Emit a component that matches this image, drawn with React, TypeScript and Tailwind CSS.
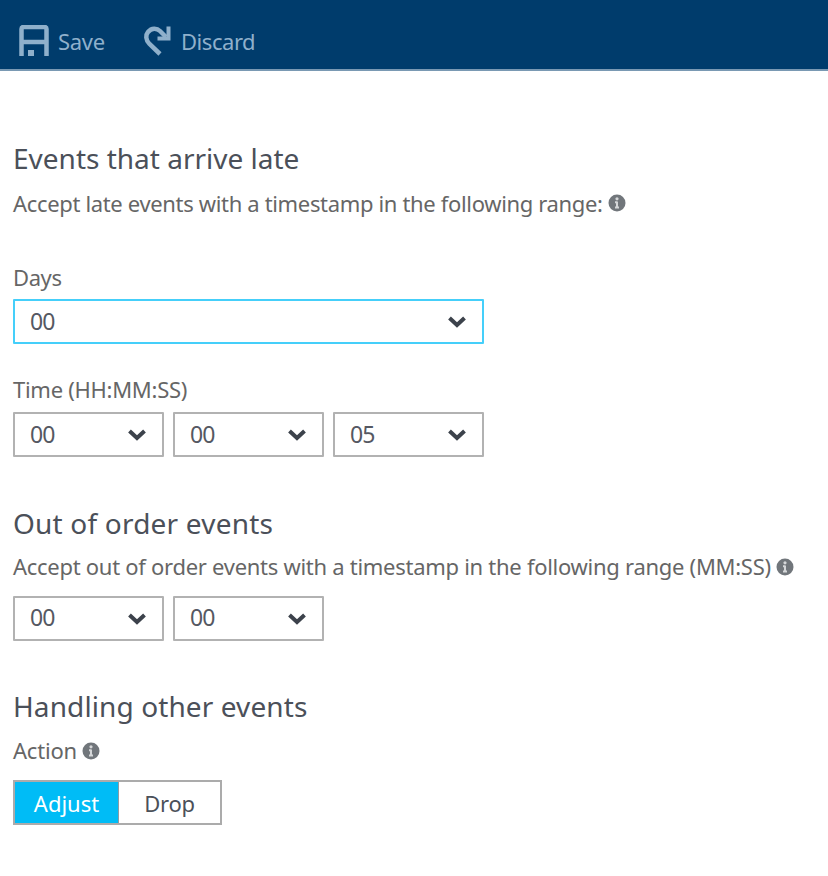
import { useState } from "react";

function InfoIcon() {
  return (
    <svg className="ml-[5px] h-[18px] w-[18px] shrink-0" viewBox="0 0 18 18">
      <circle cx="9" cy="9" r="8.500" fill="#71767b" />
      <circle cx="9" cy="4.800" r="1.600" fill="#d5d7d9" />
      <path d="M9 7.500V13.500M7 8.200H9M7 13.500H11" fill="none" stroke="#d5d7d9" strokeWidth="2" />
    </svg>
  );
}

function Select({
  value,
  className = "w-[151px] border-[#b2b2b2]",
  textClass = "",
}: {
  value: string;
  className?: string;
  textClass?: string;
}) {
  return (
    <button className={`flex h-[45px] items-center justify-between rounded-[1px] border-2 bg-white pr-[15px] pl-[15px] ${className}`}>
      <span className={`text-[23px] leading-[41px] tracking-[-0.8px] text-[#555862] ${textClass}`}>{value}</span>
      <svg className="h-[14px] w-[20px]" viewBox="0 0 20 14">
        <path d="M2.500 3L10 10L17.500 3" fill="none" stroke="#3c424b" strokeWidth="4" />
      </svg>
    </button>
  );
}

export default function App() {
  const [action, setAction] = useState("Adjust");
  return (
    <div className="h-[876px] w-[828px] overflow-hidden bg-white font-['Noto_Sans','Open_Sans',sans-serif] whitespace-nowrap text-[#666666]">
      <header className="flex h-[71px] items-start border-b-2 border-[#7a99b3] bg-[#003c6c] pl-[18px] text-[#8fb0cb]">
        <button className="flex">
          <svg className="mt-[25px] h-[32px] w-[32px]" viewBox="0 0 32 32">
            <path d="M3.500 31V4Q3.500 2 5.500 2H26.500Q28.500 2 28.500 4V31M3 17H29" fill="none" stroke="currentColor" strokeWidth="4.500" />
            <rect x="10" y="25" width="6" height="6" fill="currentColor" />
          </svg>
          <span className="mt-[25px] ml-[8px] w-[85px] text-left text-[22px] leading-[32px] tracking-[-0.3px]">Save</span>
        </button>
        <button className="flex">
          <svg className="mt-[25px] h-[32px] w-[30px]" viewBox="0 0 30 32">
            <path d="M17 29L6.500 19C2.500 15 2.500 10 5 7C8.500 2.500 14 3 17 6L23 12" fill="none" stroke="currentColor" strokeWidth="4.500" />
            <path d="M25.500 1.500V13.500H14.500" fill="none" stroke="currentColor" strokeWidth="4" />
          </svg>
          <span className="mt-[25px] ml-[8px] text-[22px] leading-[32px] tracking-[-0.45px]">Discard</span>
        </button>
      </header>
      <main className="pl-[13px]">
        <section className="h-[384px] pt-[67px]">
          <h2 className="h-[40px] text-[28px] leading-[40px] text-[#4b5059]">Events that arrive late</h2>
          <div className="mt-[9px] flex h-[32px] items-center text-[22px]">
            <span className="tracking-[-0.34px]">Accept late events with a timestamp in the following range:</span>
            <InfoIcon />
          </div>
          <div className="mt-[42px] h-[32px] text-[22px] leading-[32px] tracking-[-0.4px]">Days</div>
          <Select value="00" className="mt-[6px] w-[471px] border-[#45cffa]" />
          <div className="mt-[29px] h-[32px] text-[22px] leading-[32px] tracking-[-0.28px]">Time (HH:MM:SS)</div>
          <div className="mt-[7px] flex gap-[9px]">
            <Select value="00" />
            <Select value="00" />
            <Select value="05" />
          </div>
        </section>
        <section className="h-[184px] pt-[48px]">
          <h2 className="h-[40px] text-[28px] leading-[40px] tracking-[0.2px] text-[#4b5059]">Out of order events</h2>
          <div className="mt-[8px] flex h-[32px] items-center text-[22px]">
            <span className="pb-[2px] tracking-[-0.28px]">Accept out of order events with a timestamp in the following range (MM:SS)</span>
            <InfoIcon />
          </div>
          <div className="mt-[13px] flex gap-[9px]">
            <Select value="00" textClass="pb-[2px]" />
            <Select value="00" textClass="pb-[2px]" />
          </div>
        </section>
        <section className="pt-[47px]">
          <h2 className="h-[40px] text-[28px] leading-[40px] tracking-[0.1px] text-[#4b5059]">Handling other events</h2>
          <div className="mt-[9px] flex h-[32px] items-center text-[22px]">
            <span className="pb-[2px] tracking-[-0.2px]">Action</span>
            <InfoIcon />
          </div>
          <div className="mt-[13px] flex h-[45px] w-[209px] border-2 border-[#ababab] text-[22px] text-[#4b5059]">
            <button onClick={() => setAction("Adjust")} className={action === "Adjust" ? "w-[104px] border-r border-[#8d9ba3] bg-[#00bcf6] pt-[2px] text-white" : "w-[104px] border-r border-[#ababab] pt-[2px]"}>Adjust</button>
            <button onClick={() => setAction("Drop")} className={action === "Drop" ? "flex-1 bg-[#00bcf6] pt-[2px] tracking-[-0.3px] text-white" : "flex-1 pt-[2px] tracking-[-0.3px]"}>Drop</button>
          </div>
        </section>
      </main>
    </div>
  );
}
